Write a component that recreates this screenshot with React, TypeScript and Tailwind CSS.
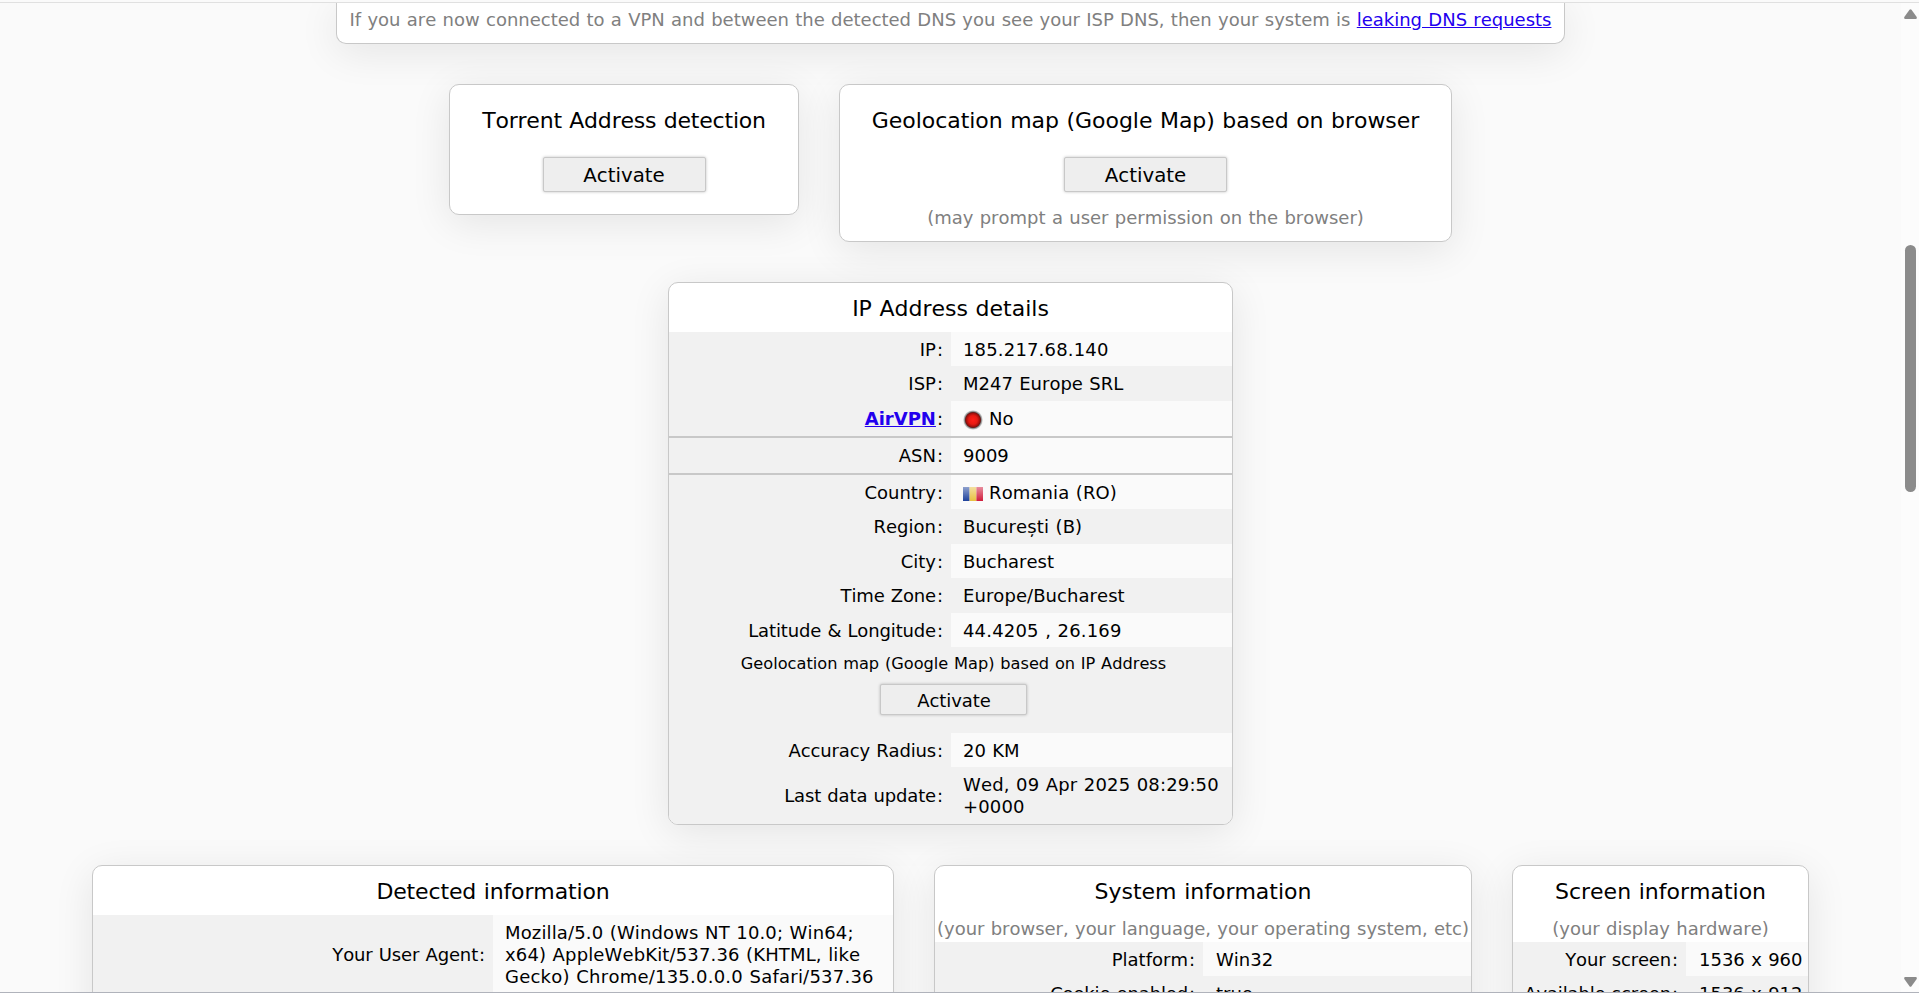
import React from "react";

const CARD =
  "rounded-[10px] border border-[#c8c8c8] bg-white shadow-[0_8px_40px_rgba(0,0,0,0.09)]";

function Title({ children, className = "" }: { children: React.ReactNode; className?: string }) {
  return (
    <h2 className={`whitespace-nowrap text-center text-[22px] leading-[26px] ${className}`}>
      {children}
    </h2>
  );
}

function Activate({ className }: { className: string }) {
  return (
    <button
      className={`flex items-center justify-center rounded-[2px] border border-[#c8c8c8] bg-[#eeeeee] pt-[2px] shadow-[0_0_3px_rgba(0,0,0,0.25)] ${className}`}
    >
      Activate
    </button>
  );
}

function Row({
  label,
  children,
  height,
  labelWidth,
  shade,
  className = "",
  valueClass = "pl-3",
}: {
  label: React.ReactNode;
  children: React.ReactNode;
  height: string;
  labelWidth: string;
  shade?: boolean;
  className?: string;
  valueClass?: string;
}) {
  const nudge = height === "h-[34px]" ? "pt-[2px]" : "";
  const tracking = typeof label === "string" && label.length > 8 ? "tracking-[-0.14px]" : "";
  return (
    <div className={`flex w-full ${height} ${className}`}>
      <div className={`flex shrink-0 items-center justify-end whitespace-nowrap bg-[#f1f1f1] pr-2 ${nudge} ${tracking} ${labelWidth}`}>
        {label}
        <span className="ml-px">:</span>
      </div>
      <div className={`flex grow items-center whitespace-nowrap ${nudge} ${valueClass} ${shade ? "bg-[#f1f1f1]" : "bg-[#fafafa]"}`}>
        <div>{children}</div>
      </div>
    </div>
  );
}

function RedLed() {
  return (
    <svg width="20" height="20" viewBox="0 0 20 20" className="mr-[6px] inline-block align-[-5px]">
      <defs>
        <radialGradient id="led">
          <stop offset="0" stopColor="#ff1e18" />
          <stop offset="0.55" stopColor="#e81a12" />
          <stop offset="1" stopColor="#7d0c0a" />
        </radialGradient>
        <radialGradient id="rim">
          <stop offset="0.75" stopColor="#333" />
          <stop offset="1" stopColor="#999" stopOpacity="0.3" />
        </radialGradient>
      </defs>
      <circle cx="10" cy="10" r="9.8" fill="url(#rim)" />
      <circle cx="10" cy="10" r="7.8" fill="url(#led)" />
    </svg>
  );
}

function Flag() {
  return (
    <svg width="20" height="14" viewBox="0 0 20 14" className="mr-[6px] inline-block align-[-2px]">
      <defs>
        <linearGradient id="shine" x1="0" y1="0" x2="0" y2="1">
          <stop offset="0" stopColor="#fff" stopOpacity="0.5" />
          <stop offset="1" stopColor="#fff" stopOpacity="0" />
        </linearGradient>
      </defs>
      <path fill="#1e429c" d="M0 0h6.6v14H0z" />
      <path fill="#e8c040" d="M6.6 0h6.8v14H6.6z" />
      <path fill="#d01c3c" d="M13.4 0H20v14h-6.6z" />
      <path fill="url(#shine)" d="M0 0h20v14H0z" />
    </svg>
  );
}

export default function App() {
  return (
    <div className="flex h-[993px] w-[1919px] flex-col overflow-hidden bg-[#fafafa] font-['Verdana','DejaVu_Sans',sans-serif] text-[18px] leading-[22px] text-black [font-kerning:none] [word-spacing:0.034em]">
      <div className="h-[3px] w-full shrink-0 border-b border-[#e0e0e0]" />
      <div className="flex h-[989px] w-full shrink-0 overflow-hidden">
        <div className="flex h-full w-[1901px] flex-col items-center overflow-hidden">
          <div className="flex h-[41px] w-[1229px] shrink-0 justify-center rounded-b-[10px] border border-t-0 border-[#c8c8c8] bg-white pt-[6px] text-[#808080] shadow-[0_8px_40px_rgba(0,0,0,0.09)]">
            <p className="whitespace-nowrap tracking-[-0.015px]">
              If you are now connected to a VPN and between the detected DNS you see your ISP DNS, then your system is{" "}
              <a href="#" className="text-[#2200ee] underline">leaking DNS requests</a>
            </p>
          </div>

          <div className="mt-10 flex shrink-0 items-start gap-10">
            <div className={`flex h-[131px] w-[350px] flex-col items-center pt-[23px] ${CARD}`}>
              <Title className="tracking-[-0.2px]">Torrent Address detection</Title>
              <Activate className="mt-[23px] h-[35px] w-[163px] text-[19.8px]" />
            </div>
            <div className={`flex h-[158px] w-[613px] flex-col items-center pt-[23px] ${CARD}`}>
              <Title className="tracking-[-0.04px]">Geolocation map (Google Map) based on browser</Title>
              <Activate className="mt-[23px] h-[35px] w-[163px] text-[19.8px]" />
              <p className="mt-[15px] whitespace-nowrap text-[#808080]">
                (may prompt a user permission on the browser)
              </p>
            </div>
          </div>

          <div className={`mt-10 h-[543px] w-[565px] shrink-0 overflow-hidden ${CARD}`}>
            <Title className="h-[49px] pt-[13px]">IP Address details</Title>
            <Row label="IP" height="h-[34px]" labelWidth="w-[282px]" valueClass="pl-3 tracking-[0.17px]">185.217.68.140</Row>
            <Row label="ISP" height="h-[35px]" labelWidth="w-[282px]" shade>M247 Europe SRL</Row>
            <Row
              label={<a href="#" className="font-bold text-[#2200ee] underline">AirVPN</a>}
              height="h-[35px]"
              labelWidth="w-[282px]"
            >
              <RedLed />No
            </Row>
            <Row label="ASN" height="h-[39px]" labelWidth="w-[282px]" className="border-y-2 border-[#c8c8c8]">9009</Row>
            <Row label="Country" height="h-[34px]" labelWidth="w-[282px]" valueClass="pl-3 tracking-[0.12px]"><Flag />Romania (RO)</Row>
            <Row label="Region" height="h-[35px]" labelWidth="w-[282px]" shade valueClass="pl-3 tracking-[0.12px]">București (B)</Row>
            <Row label="City" height="h-[34px]" labelWidth="w-[282px]">Bucharest</Row>
            <Row label="Time Zone" height="h-[35px]" labelWidth="w-[282px]" shade valueClass="pl-3 tracking-[0.06px]">Europe/Bucharest</Row>
            <Row label="Latitude &amp; Longitude" height="h-[34px]" labelWidth="w-[282px]" valueClass="pl-3 tracking-[0.17px]">44.4205 , 26.169</Row>
            <div className="flex h-[86px] flex-col items-center bg-[#f1f1f1] pl-[6px] pt-[6px]">
              <p className="whitespace-nowrap text-[16.2px]">Geolocation map (Google Map) based on IP Address</p>
              <Activate className="mt-[9px] h-[31px] w-[147px] pl-px tracking-[-0.1px]" />
            </div>
            <Row label="Accuracy Radius" height="h-[34px]" labelWidth="w-[282px]">20 KM</Row>
            <Row label="Last data update" height="h-[57px]" labelWidth="w-[282px]" shade valueClass="pl-3 tracking-[0.15px]">
              Wed, 09 Apr 2025 08:29:50<br />+0000
            </Row>
          </div>

          <div className="mt-10 flex h-[127px] shrink-0 items-start gap-10">
            <div className={`h-[300px] w-[802px] overflow-hidden ${CARD}`}>
              <Title className="h-[49px] pt-[13px] tracking-[-0.13px]">Detected information</Title>
              <Row label="Your User Agent" height="h-[79px]" labelWidth="w-[400px]" valueClass="pl-3">
                <span className="tracking-[0.14px]">Mozilla/5.0 (Windows NT 10.0; Win64;</span><br />
                <span className="tracking-[0.14px]">x64) AppleWebKit/537.36 (KHTML, like</span><br />
                <span className="tracking-[0.23px]">Gecko) Chrome/135.0.0.0 Safari/537.36</span>
              </Row>
            </div>
            <div className={`h-[300px] w-[538px] overflow-hidden ${CARD}`}>
              <Title className="h-[49px] pt-[13px]">System information</Title>
              <p className="h-[27px] whitespace-nowrap pt-[3px] text-center tracking-[-0.02px] text-[#808080]">
                (your browser, your language, your operating system, etc)
              </p>
              <Row label="Platform" height="h-[34px]" labelWidth="w-[268px]" valueClass="pl-[13px]">Win32</Row>
              <Row label="Cookie enabled" height="h-[35px]" labelWidth="w-[268px]" shade valueClass="pl-[13px]">true</Row>
            </div>
            <div className={`h-[300px] w-[297px] overflow-hidden ${CARD}`}>
              <Title className="h-[49px] pt-[13px]">Screen information</Title>
              <p className="h-[27px] whitespace-nowrap pt-[3px] text-center text-[#808080]">(your display hardware)</p>
              <Row label="Your screen" height="h-[34px]" labelWidth="w-[173px]" valueClass="pl-[13px]">1536 x 960</Row>
              <Row label="Available screen" height="h-[35px]" labelWidth="w-[173px]" shade valueClass="pl-[13px]">1536 x 912</Row>
            </div>
          </div>
        </div>
        <div className="flex h-full w-[18px] flex-col bg-[#fcfcfc] pl-[3px] pt-[6px]">
          <svg width="13" height="10" viewBox="0 0 13 10"><path fill="#8b8b8b" d="M5.5 .8Q6.5 -.4 7.5 .8L12.7 8Q13.2 10 11.8 10H1.2Q-.2 10 .3 8Z" /></svg>
          <div className="ml-px mt-[226px] h-[247px] w-[11px] rounded-full bg-[#8b8b8b]" />
          <svg className="mt-[485px]" width="13" height="10" viewBox="0 0 13 10"><path fill="#8b8b8b" d="M5.5 9.2Q6.5 10.4 7.5 9.2L12.7 2Q13.2 0 11.8 0H1.2Q-.2 0 .3 2Z" /></svg>
        </div>
      </div>
      <div className="h-px w-full shrink-0 bg-[#b0b3bb]" />
    </div>
  );
}
